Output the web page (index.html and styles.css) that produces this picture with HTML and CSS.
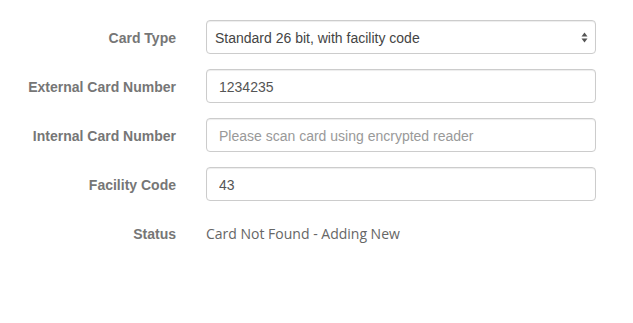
FILE: index.html
```html
<!DOCTYPE html>
<html>
<head>
<meta charset="utf-8">
<link rel="stylesheet" href="styles.css">
</head>
<body>
<form class="form">
  <div class="row">
    <label class="label">Card Type</label>
    <div class="control select-wrap">
      <select class="input select">
        <option>Standard 26 bit, with facility code</option>
      </select>
      <svg class="arrows" width="7" height="11" viewBox="0 0 7 11"><path d="M3.5 0.5 L6.5 4.5 L0.5 4.5 Z M3.5 10.5 L6.5 6.5 L0.5 6.5 Z" fill="#555"/></svg>
    </div>
  </div>
  <div class="row">
    <label class="label">External Card Number</label>
    <div class="control"><input class="input" type="text" value="1234235"></div>
  </div>
  <div class="row">
    <label class="label">Internal Card Number</label>
    <div class="control"><input class="input" type="text" placeholder="Please scan card using encrypted reader"></div>
  </div>
  <div class="row">
    <label class="label">Facility Code</label>
    <div class="control"><input class="input" type="text" value="43"></div>
  </div>
  <div class="row">
    <label class="label">Status</label>
    <div class="control"><p class="static">Card Not Found - Adding New</p></div>
  </div>
</form>
</body>
</html>
```
FILE: styles.css
```css
html, body {
  margin: 0;
  padding: 0;
  background: #fff;
}
body {
  font-family: "Liberation Sans", Arial, sans-serif;
  font-size: 14px;
}
.form {
  padding-top: 20px;
}
.row {
  display: flex;
  gap: 30px;
  margin-bottom: 15px;
}
.label {
  width: 176px;
  text-align: right;
  font-weight: bold;
  color: #767676;
  line-height: 20px;
  padding-top: 8px;
}
.control {
  width: 390px;
}
.select-wrap {
  position: relative;
}
.input {
  box-sizing: border-box;
  display: block;
  width: 100%;
  height: 34px;
  padding: 7px 12px 5px;
  font-family: "Liberation Sans", Arial, sans-serif;
  font-size: 14px;
  color: #555;
  background: #fff;
  border: 1px solid #ccc;
  border-radius: 4px;
  box-shadow: inset 0 1px 1px rgba(0,0,0,0.075);
  outline: none;
  margin: 0;
}
.input::placeholder {
  color: #999;
}
.select {
  appearance: none;
  -webkit-appearance: none;
  padding-left: 8px;
  color: #444;
}
.arrows {
  position: absolute;
  right: 8px;
  top: 12px;
}
.static {
  margin: 0;
  padding-top: 8px;
  line-height: 20px;
  font-family: "Open Sans", sans-serif;
  font-size: 14px;
  color: #666;
}
```
